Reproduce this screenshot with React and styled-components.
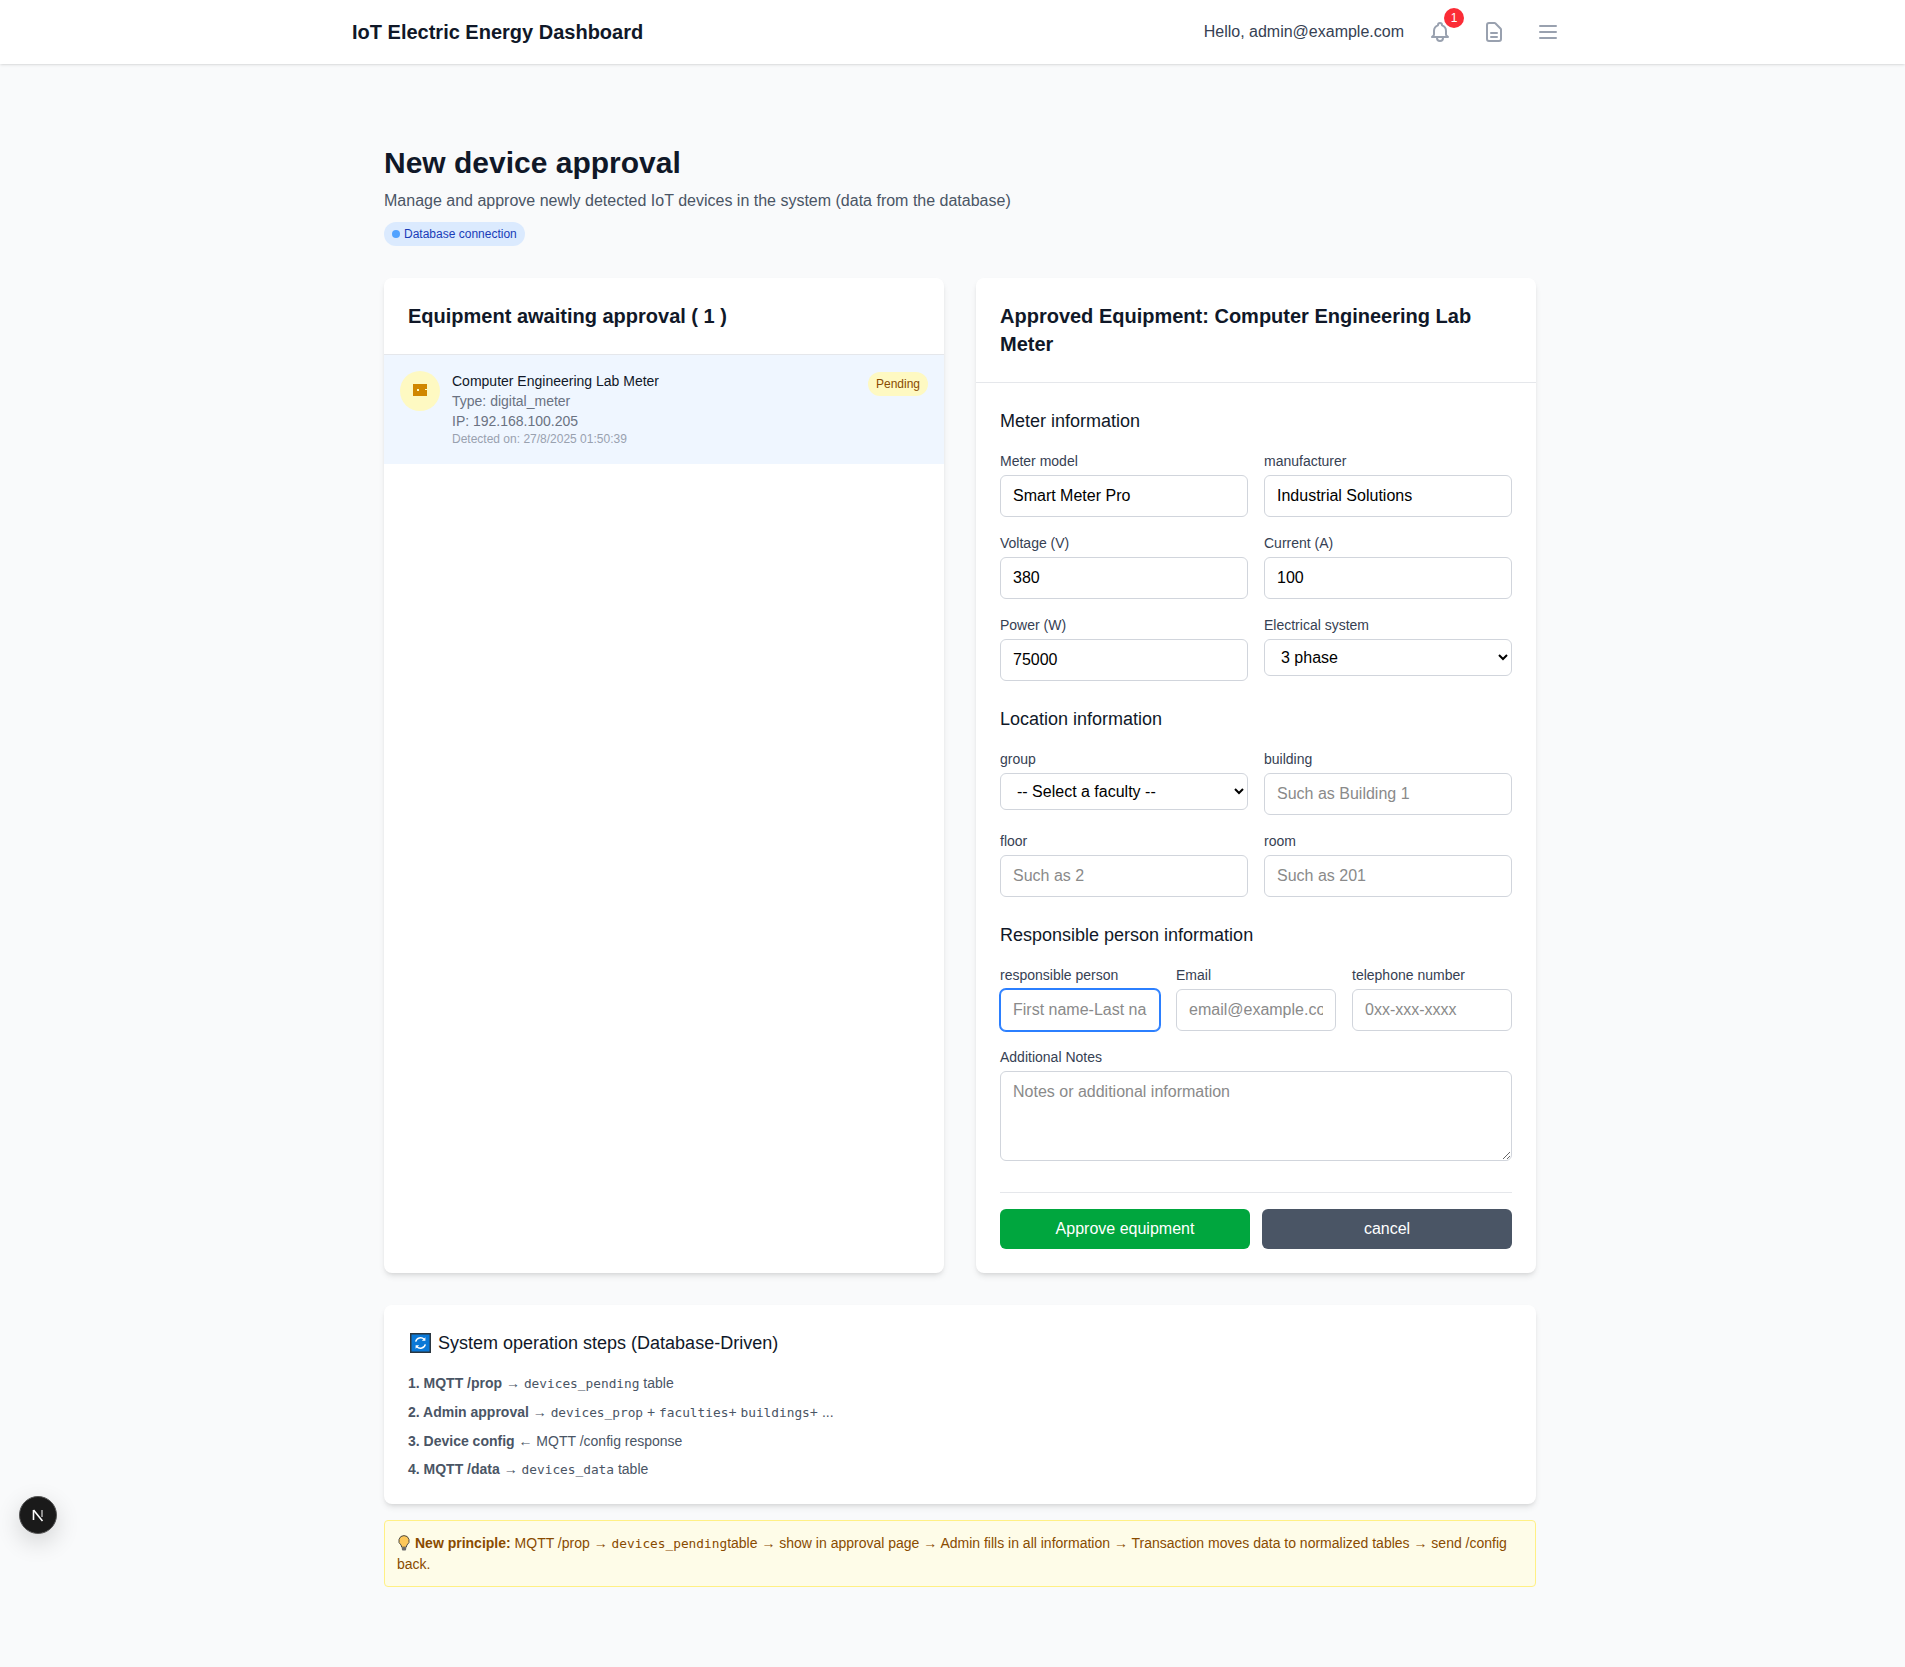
import styled, { createGlobalStyle } from 'styled-components';

const GlobalStyle = createGlobalStyle`
  * {
    box-sizing: border-box;
  }
  body {
    margin: 0;
    background: #f9fafb;
    color: #101828;
    font-family: 'Liberation Sans', Arial, sans-serif;
  }
  h1, h2, h3, p {
    margin: 0;
  }
`;

const Page = styled.div`
  position: relative;
  min-height: 1667px;
`;

const TopBar = styled.header`
  height: 64px;
  padding: 0 337px 0 352px;
  display: flex;
  align-items: center;
  justify-content: space-between;
  background: #fff;
  box-shadow: 0 1px 3px 0 rgba(0, 0, 0, 0.1), 0 1px 2px -1px rgba(0, 0, 0, 0.1);
`;

const Brand = styled.div`
  font-size: 20px;
  line-height: 28px;
  font-weight: 700;
  color: #101828;
`;

const TopActions = styled.div`
  display: flex;
  align-items: center;
  gap: 14px;
`;

const Hello = styled.span`
  margin-right: 2px;
  font-size: 16px;
  color: #364153;
`;

const IconButton = styled.button`
  position: relative;
  width: 40px;
  height: 40px;
  padding: 8px;
  border: 0;
  background: none;
  color: #99a1af;
  svg {
    display: block;
  }
`;

const Badge = styled.span`
  position: absolute;
  top: -4px;
  right: -4px;
  width: 20px;
  height: 20px;
  border-radius: 50%;
  display: flex;
  align-items: center;
  justify-content: center;
  background: #fb2c36;
  color: #fff;
  font-size: 12px;
  font-family: 'Liberation Sans', Arial, sans-serif;
`;

const Main = styled.main`
  width: 1152px;
  margin-left: 384px;
  padding: 81px 0 80px;
`;

const Title = styled.h1`
  font-size: 30px;
  line-height: 36px;
  font-weight: 700;
  color: #101828;
`;

const Subtitle = styled.p`
  margin-top: 8px;
  font-size: 16px;
  line-height: 24px;
  color: #4a5565;
`;

const StatusPill = styled.div`
  margin-top: 9px;
  display: inline-flex;
  align-items: center;
  gap: 4px;
  height: 24px;
  padding: 0 8px;
  border-radius: 999px;
  background: #dbeafe;
  color: #193cb8;
  font-size: 12px;
`;

const Dot = styled.span`
  width: 8px;
  height: 8px;
  border-radius: 50%;
  background: #51a2ff;
`;

const Columns = styled.div`
  margin-top: 32px;
  display: grid;
  grid-template-columns: 1fr 1fr;
  gap: 32px;
`;

const Card = styled.section`
  background: #fff;
  border-radius: 8px;
  box-shadow: 0 4px 6px -1px rgba(0, 0, 0, 0.1), 0 2px 4px -2px rgba(0, 0, 0, 0.1);
`;

const CardHead = styled.div`
  padding: 24px;
  border-bottom: 1px solid #e5e7eb;
`;

const CardTitle = styled.h2`
  font-size: 20px;
  line-height: 28px;
  font-weight: 700;
  color: #101828;
`;

const DeviceRow = styled.div`
  padding: 16px 16px 17px;
  display: flex;
  align-items: flex-start;
  gap: 12px;
  background: #eff6ff;
`;

const DeviceIcon = styled.div`
  flex: none;
  width: 40px;
  height: 40px;
  padding-bottom: 2px;
  border-radius: 50%;
  display: flex;
  align-items: center;
  justify-content: center;
  background: #fef9c2;
`;

const DeviceInfo = styled.div`
  flex: 1;
`;

const DeviceLine = styled.p`
  font-size: ${(p) => (p.$small ? '12px' : '14px')};
  line-height: ${(p) => (p.$small ? '16px' : '20px')};
  color: ${(p) => p.$color || '#6a7282'};
`;

const PendingTag = styled.span`
  margin-top: 1px;
  padding: 4px 8px;
  border-radius: 999px;
  background: #fef9c2;
  color: #894b00;
  font-size: 12px;
  line-height: 16px;
`;

const Form = styled.form`
  padding: 24px;
`;

const SectionTitle = styled.h3`
  margin: ${(p) => (p.$first ? '0' : '24px')} 0 16px;
  font-size: 18px;
  line-height: 28px;
  font-weight: 400;
  color: #101828;
`;

const FieldGrid = styled.div`
  display: grid;
  grid-template-columns: repeat(${(p) => p.$cols || 2}, minmax(0, 1fr));
  gap: 16px;
  align-items: start;
`;

const Field = styled.label`
  display: block;
  min-width: 0;
  margin-top: ${(p) => (p.$spaced ? '16px' : '0')};
`;

const FieldLabel = styled.span`
  display: block;
  margin-bottom: 4px;
  font-size: 14px;
  line-height: 20px;
  color: #364153;
`;

const TextInput = styled.input`
  display: block;
  width: 100%;
  height: 42px;
  padding: 8px 12px;
  border: 1px solid ${(p) => (p.$focused ? '#2b7fff' : '#d1d5dc')};
  border-radius: 6px;
  outline: none;
  box-shadow: ${(p) => (p.$focused ? '0 0 0 1px #2b7fff' : 'none')};
  background: #fff;
  color: #000;
  font: 16px/24px 'Liberation Sans', Arial, sans-serif;
  &::placeholder {
    color: #8a8a8a;
  }
`;

const SelectBox = styled.select`
  display: block;
  width: 100%;
  padding: 8px 12px;
  border: 1px solid #d1d5dc;
  border-radius: 6px;
  background: #fff;
  color: #000;
  font: 16px 'Liberation Sans', Arial, sans-serif;
`;

const NotesArea = styled.textarea`
  display: block;
  width: 100%;
  padding: 8px 12px;
  border: 1px solid #d1d5dc;
  border-radius: 6px;
  background: #fff;
  font: 16px/24px 'Liberation Sans', Arial, sans-serif;
  &::placeholder {
    color: #8a8a8a;
  }
`;

const FormActions = styled.div`
  margin-top: 31px;
  padding-top: 16px;
  border-top: 1px solid #e5e7eb;
  display: flex;
  gap: 12px;
`;

const ActionButton = styled.button`
  flex: 1;
  height: 40px;
  border: 0;
  border-radius: 6px;
  background: ${(p) => p.$bg};
  color: #fff;
  font: 16px 'Liberation Sans', Arial, sans-serif;
`;

const StepsCard = styled(Card)`
  margin-top: 32px;
  padding: 24px;
`;

const StepsTitle = styled.h3`
  margin-bottom: 16px;
  padding-left: 2px;
  display: flex;
  align-items: center;
  gap: 7px;
  font-size: 18px;
  line-height: 28px;
  font-weight: 400;
  color: #101828;
`;

const StepList = styled.div`
  display: grid;
  gap: 8px;
  font-size: 14px;
  color: #4a5565;
`;

const Step = styled.div`
  line-height: 20px;
  white-space: nowrap;
`;

const Mono = styled.code`
  font-family: 'DejaVu Sans Mono', monospace;
  font-size: 12.8px;
`;

const Notice = styled.div`
  margin-top: 16px;
  padding: 12px 12px 11px;
  border: 1px solid #fff085;
  border-radius: 4px;
  background: #fefce8;
  color: #894b00;
  font-size: 14px;
  line-height: 21px;
  svg {
    vertical-align: -3px;
    margin: 0 5px 0 1px;
  }
`;

const DevBadge = styled.div`
  position: absolute;
  left: 19px;
  top: 1496px;
  width: 38px;
  height: 38px;
  border-radius: 50%;
  display: flex;
  align-items: center;
  justify-content: center;
  background: #1a1a1a;
  border: 1px solid #555;
  box-shadow: 0 8px 24px rgba(0, 0, 0, 0.16);
`;

const BellIcon = () => (
  <svg width="24" height="24" viewBox="0 0 24 24" fill="none" stroke="currentColor" strokeWidth="2" strokeLinecap="round" strokeLinejoin="round">
    <path d="M15 17h5l-1.405-1.405A2.032 2.032 0 0118 14.158V11a6.002 6.002 0 00-4-5.659V5a2 2 0 10-4 0v.341C7.67 6.165 6 8.388 6 11v3.159c0 .538-.214 1.055-.595 1.436L4 17h5m6 0v1a3 3 0 11-6 0v-1m6 0H9" />
  </svg>
);

const DocIcon = () => (
  <svg width="24" height="24" viewBox="0 0 24 24" fill="none" stroke="currentColor" strokeWidth="2" strokeLinecap="round" strokeLinejoin="round">
    <path d="M9 13h6m-6 4h6m2 4H7a2 2 0 01-2-2V5a2 2 0 012-2h5.586a1 1 0 01.707.293l5.414 5.414a1 1 0 01.293.707V19a2 2 0 01-2 2z" />
  </svg>
);

const MenuIcon = () => (
  <svg width="24" height="24" viewBox="0 0 24 24" fill="none" stroke="currentColor" strokeWidth="2" strokeLinecap="round">
    <path d="M4 6h16M4 12h16M4 18h16" />
  </svg>
);

const ChipIcon = () => (
  <svg width="14" height="12" viewBox="0 0 14 12">
    <rect width="14" height="12" fill="#d08700" />
    <rect x="4" y="5" width="2" height="2" fill="#fef9c2" />
    <rect x="12" y="5" width="2" height="1" fill="#fef9c2" />
  </svg>
);

const RefreshEmoji = () => (
  <svg width="21" height="20" viewBox="0 0 21 20">
    <rect x="0.75" y="0.75" width="19.5" height="18.5" fill="#0a78d7" stroke="#2a3640" strokeWidth="1.5" />
    <g fill="none" stroke="#fff" strokeWidth="1.5">
      <path d="M5.7 8.6a5 5 0 0 1 8.5-2.3" />
      <path d="M15.3 11.4a5 5 0 0 1-8.5 2.3" />
    </g>
    <path d="M15.4 4.2v3.6h-3.6zM5.6 15.8v-3.6h3.6z" fill="#fff" />
  </svg>
);

const BulbEmoji = () => (
  <svg width="12" height="16" viewBox="0 0 12 16">
    <path d="M6 .6a5.2 5.2 0 0 0-2.9 9.5l.6 2.1h4.6l.6-2.1A5.2 5.2 0 0 0 6 .6z" fill="#fcc75a" stroke="#3d3d3d" strokeWidth="0.9" />
    <rect x="3.9" y="12.2" width="4.2" height="3.4" rx="1" fill="#6b6b6b" />
  </svg>
);

const NextMark = () => (
  <svg width="14" height="14" viewBox="0 0 14 14" fill="none">
    <path d="M2.5 12V2" stroke="#fff" strokeWidth="1.6" />
    <path d="M2.5 2L11.5 13" stroke="#fff" strokeWidth="1.6" />
    <path d="M11 2v7" stroke="#aaa" strokeWidth="1.6" />
  </svg>
);

const Input = ({ label, spaced, ...rest }) => (
  <Field $spaced={spaced}>
    <FieldLabel>{label}</FieldLabel>
    <TextInput {...rest} />
  </Field>
);

export default function App() {
  return (
    <Page>
      <GlobalStyle />
      <TopBar>
        <Brand>IoT Electric Energy Dashboard</Brand>
        <TopActions>
          <Hello>Hello, admin@example.com</Hello>
          <IconButton type="button">
            <BellIcon />
            <Badge>1</Badge>
          </IconButton>
          <IconButton type="button">
            <DocIcon />
          </IconButton>
          <IconButton type="button">
            <MenuIcon />
          </IconButton>
        </TopActions>
      </TopBar>

      <Main>
        <Title>New device approval</Title>
        <Subtitle>Manage and approve newly detected IoT devices in the system (data from the database)</Subtitle>
        <StatusPill>
          <Dot />
          Database connection
        </StatusPill>

        <Columns>
          <Card>
            <CardHead>
              <CardTitle>Equipment awaiting approval ( 1 )</CardTitle>
            </CardHead>
            <DeviceRow>
              <DeviceIcon>
                <ChipIcon />
              </DeviceIcon>
              <DeviceInfo>
                <DeviceLine $color="#101828">Computer Engineering Lab Meter</DeviceLine>
                <DeviceLine>Type: digital_meter</DeviceLine>
                <DeviceLine>IP: 192.168.100.205</DeviceLine>
                <DeviceLine $small $color="#99a1af">Detected on: 27/8/2025 01:50:39</DeviceLine>
              </DeviceInfo>
              <PendingTag>Pending</PendingTag>
            </DeviceRow>
          </Card>

          <Card>
            <CardHead>
              <CardTitle>Approved Equipment: Computer Engineering Lab Meter</CardTitle>
            </CardHead>
            <Form>
              <SectionTitle $first>Meter information</SectionTitle>
              <FieldGrid>
                <Input label="Meter model" defaultValue="Smart Meter Pro" />
                <Input label="manufacturer" defaultValue="Industrial Solutions" />
                <Input label="Voltage (V)" defaultValue="380" />
                <Input label="Current (A)" defaultValue="100" />
                <Input label="Power (W)" defaultValue="75000" />
                <Field>
                  <FieldLabel>Electrical system</FieldLabel>
                  <SelectBox defaultValue="3">
                    <option value="1">1 phase</option>
                    <option value="3">3 phase</option>
                  </SelectBox>
                </Field>
              </FieldGrid>

              <SectionTitle>Location information</SectionTitle>
              <FieldGrid>
                <Field>
                  <FieldLabel>group</FieldLabel>
                  <SelectBox defaultValue="">
                    <option value="">-- Select a faculty --</option>
                  </SelectBox>
                </Field>
                <Input label="building" placeholder="Such as Building 1" />
                <Input label="floor" placeholder="Such as 2" />
                <Input label="room" placeholder="Such as 201" />
              </FieldGrid>

              <SectionTitle>Responsible person information</SectionTitle>
              <FieldGrid $cols={3}>
                <Input label="responsible person" placeholder="First name-Last name" $focused />
                <Input label="Email" placeholder="email@example.com" />
                <Input label="telephone number" placeholder="0xx-xxx-xxxx" />
              </FieldGrid>
              <Field $spaced>
                <FieldLabel>Additional Notes</FieldLabel>
                <NotesArea rows={3} placeholder="Notes or additional information" />
              </Field>

              <FormActions>
                <ActionButton type="button" $bg="#00a63e">Approve equipment</ActionButton>
                <ActionButton type="button" $bg="#4a5565">cancel</ActionButton>
              </FormActions>
            </Form>
          </Card>
        </Columns>

        <StepsCard>
          <StepsTitle>
            <RefreshEmoji />
            System operation steps (Database-Driven)
          </StepsTitle>
          <StepList>
            <Step><b>1. MQTT /prop</b> → <Mono>devices_pending</Mono> table</Step>
            <Step><b>2. Admin approval</b> → <Mono>devices_prop</Mono> + <Mono>faculties</Mono>+ <Mono>buildings</Mono>+ ...</Step>
            <Step><b>3. Device config</b> ← MQTT /config response</Step>
            <Step><b>4. MQTT /data</b> → <Mono>devices_data</Mono> table</Step>
          </StepList>
        </StepsCard>

        <Notice>
          <BulbEmoji />
          <b>New principle:</b> MQTT /prop → <Mono>devices_pending</Mono>table → show in approval page → Admin fills in all information → Transaction moves data to normalized tables → send /config back.
        </Notice>
      </Main>

      <DevBadge>
        <NextMark />
      </DevBadge>
    </Page>
  );
}
